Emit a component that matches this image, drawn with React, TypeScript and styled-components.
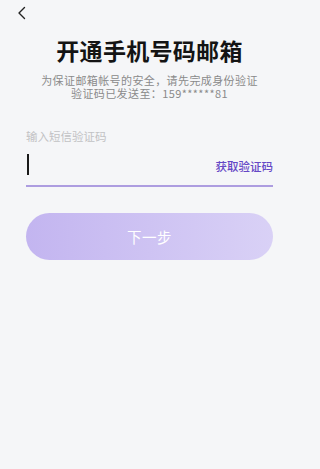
import styled, {createGlobalStyle} from "styled-components";

const GlobalStyle = createGlobalStyle`
  html, body {
    margin: 0;
    padding: 0;
    background: #f5f6f8;
  }
  * {
    box-sizing: border-box;
  }
`

const cjk = `"Noto Sans CJK SC", "Noto Sans", sans-serif`

const BackIcon = () => (
    <svg width="10" height="14" viewBox="0 0 10 14" fill="none">
        <path d="M7.5 1.5 L2 7 L7.5 12.5" stroke="#222" strokeWidth="1.4" strokeLinecap="round"
              strokeLinejoin="round"/>
    </svg>
)

export default function App() {
    return (
        <>
            <GlobalStyle/>
            <StyledPage>
                <StyledNav>
                    <StyledBack>
                        <BackIcon/>
                    </StyledBack>
                </StyledNav>
                <StyledTitle>开通手机号码邮箱</StyledTitle>
                <StyledSubtitle>
                    <span>为保证邮箱帐号的安全，请先完成身份验证</span>
                    <span>验证码已发送至：159******81</span>
                </StyledSubtitle>
                <StyledForm>
                    <StyledLabel>输入短信验证码</StyledLabel>
                    <StyledInputRow>
                        <StyledCursor/>
                        <StyledSendCode>获取验证码</StyledSendCode>
                    </StyledInputRow>
                    <StyledNextButton disabled>下一步</StyledNextButton>
                </StyledForm>
            </StyledPage>
        </>
    )
}

const StyledPage = styled.div`
  width: 297px;
  height: 469px;
  padding-left: 2px;
  background: #f5f6f8;
  font-family: ${cjk};
  display: flex;
  flex-direction: column;
  align-items: center;
`

const StyledNav = styled.div`
  width: 100%;
  height: 36px;
  display: flex;
  align-items: flex-start;
  padding: 5px 0 0 13px;
`

const StyledBack = styled.div`
  width: 14px;
  height: 16px;
  display: flex;
  align-items: center;
  justify-content: center;
`

const StyledTitle = styled.h1`
  margin: 0;
  font-size: 23px;
  line-height: 28px;
  font-weight: 700;
  color: #141414;
  letter-spacing: 0.3px;
`

const StyledSubtitle = styled.p`
  margin: 10px 0 0;
  display: flex;
  flex-direction: column;
  align-items: center;
  font-size: 11px;
  line-height: 13px;
  color: #8a8a8a;
  text-align: center;
  letter-spacing: 0.4px;
`

const StyledForm = styled.div`
  width: 247px;
  margin-top: 29px;
  display: flex;
  flex-direction: column;
`

const StyledLabel = styled.div`
  font-size: 11.5px;
  line-height: 14px;
  color: #c2c2c4;
`

const StyledInputRow = styled.div`
  margin-top: 4px;
  height: 40px;
  display: flex;
  align-items: center;
  justify-content: space-between;
  padding-left: 1px;
  border-bottom: 2px solid #ad9de0;
`

const StyledCursor = styled.span`
  width: 1.5px;
  height: 21px;
  background: #1a1a1a;
  margin-top: -4px;
`

const StyledSendCode = styled.span`
  font-size: 11.5px;
  font-weight: 500;
  color: #6548c6;
`

const StyledNextButton = styled.button`
  margin-top: 26px;
  height: 47px;
  border: none;
  border-radius: 24px;
  background: linear-gradient(90deg, #c3b5f0 0%, #d9d1f6 100%);
  color: #ffffff;
  font-family: ${cjk};
  font-size: 14.5px;
  letter-spacing: 0.5px;
  padding: 0;
  cursor: default;
`
